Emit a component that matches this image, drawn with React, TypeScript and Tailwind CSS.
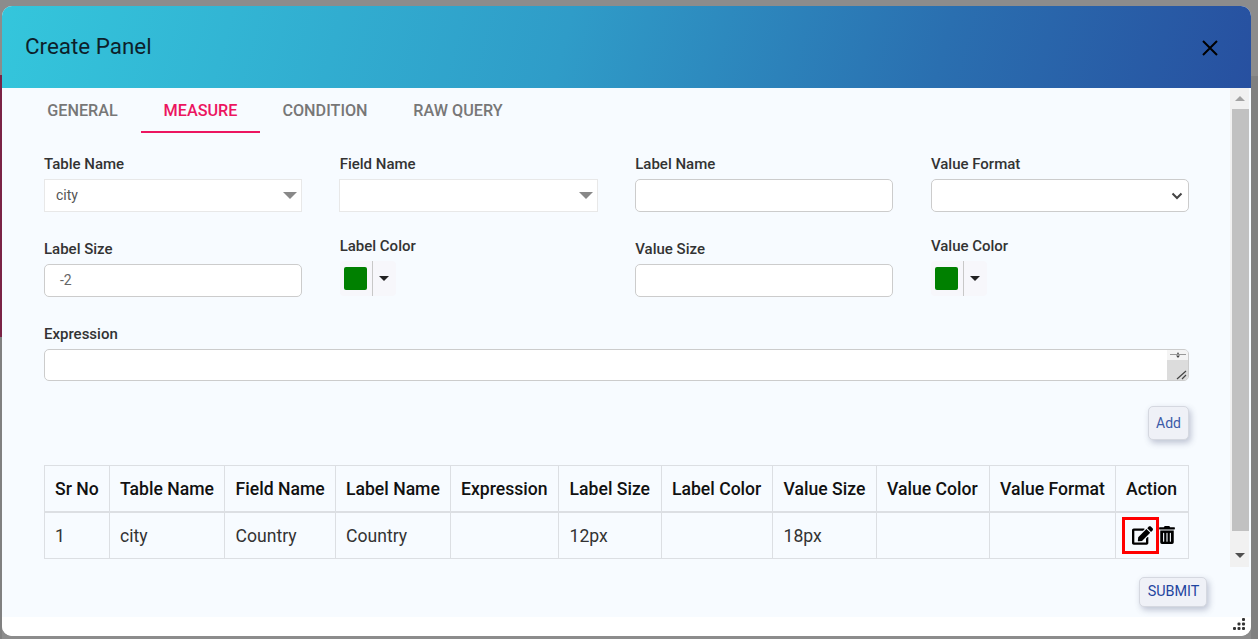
import React from "react";

const headers = ["Sr No","Table Name","Field Name","Label Name","Expression","Label Size","Label Color","Value Size","Value Color","Value Format","Action"];
const widths = [65,115,111,115,108,103,111,104,113,126,73];
const row = ["1","city","Country","Country","","12px","","18px","",""];

function pad(i: number) {
  return i === 2 || i === 5 || i === 7 ? "pl-[10.6px]" : "pl-[10px]";
}

function Label({ children, cls = "" }: { children: React.ReactNode; cls?: string }) {
  return <div className={"text-[15px] leading-[16px] font-medium text-[#333333] " + cls}>{children}</div>;
}

function Select2({ value, cls = "" }: { value?: string; cls?: string }) {
  return (
    <div className={"flex h-[33px] items-center justify-between border border-[#e8e8e8] bg-white pl-[11px] pr-[4px] text-[14px] text-[#555555] " + cls}>
      <span>{value}</span>
      <span className="h-0 w-0 border-x-[7px] border-t-[7px] border-x-transparent border-t-[#888888]" />
    </div>
  );
}

function Input({ value }: { value?: string }) {
  return (
    <div className="flex h-[33px] items-center rounded-[5px] border border-[#cccccc] bg-white px-[15px] text-[14px] text-[#666666]">
      {value}
    </div>
  );
}

function ColorPick() {
  return (
    <div className="flex h-[35px] w-[56px] rounded-[4px] bg-[#f7f7fb]">
      <div className="flex w-[33px] items-center justify-center border-r border-[#c8c8c8]">
        <div className="h-[23px] w-[23px] rounded-[2px] bg-[#008000]" />
      </div>
      <div className="flex flex-1 items-center justify-center">
        <span className="h-0 w-0 border-x-[5px] border-t-[5px] border-x-transparent border-t-[#222222]" />
      </div>
    </div>
  );
}

export default function App() {
  return (
    <div className="relative h-[639px] w-[1258px] overflow-hidden bg-[#8c8c8c] font-['Roboto',sans-serif]">
      <div className="absolute left-0 top-[75px] h-[262px] w-[2px] bg-[#7a2346]" />
      <div className="absolute left-0 top-[337px] h-[302px] w-[2px] bg-[#808080]" />
      <div className="absolute left-[1251px] top-[76px] h-[563px] w-[7px] bg-[#808080]" />

      <div className="absolute left-[2px] top-[6px] flex h-[630px] w-[1249px] flex-col overflow-hidden rounded-[10px] bg-white">
        <div className="flex h-[82px] shrink-0 items-center justify-between bg-[linear-gradient(105deg,#34c6dc_0%,#2f9cc8_45%,#2a6fb0_75%,#2750a0_100%)] pl-[23px] pr-[33px]">
          <div className="text-[22.4px] leading-[26px] text-[#0d1f2b] mt-[-2px]">Create Panel</div>
          <svg width="16" height="16" viewBox="0 0 16 16" className="mt-[2px]">
            <path d="M1 1L15 15M15 1L1 15" stroke="#000" strokeWidth="2" fill="none" />
          </svg>
        </div>

        <div className="flex h-[529px] shrink-0 bg-[#f7fbff]">
          <div className="w-[1228px] shrink-0 pl-[42px] pr-[41px]">
            <div className="flex h-[45px] text-[16.2px] font-medium text-[#777777]">
              <div className="flex w-[77px] items-start justify-center pt-[11px]">GENERAL</div>
              <div className="ml-[20px] flex w-[119px] items-start justify-center border-b-2 border-[#ec1560] pt-[11px] text-[#ec1560]">MEASURE</div>
              <div className="ml-[22px] flex w-[86px] items-start justify-center pt-[11px]">CONDITION</div>
              <div className="ml-[45px] flex w-[90px] items-start justify-center pt-[11px]">RAW QUERY</div>
            </div>

            <div className="grid grid-cols-4 gap-x-[37.5px] pt-[23px]">
              <div><Label cls="mb-[7px]">Table Name</Label><Select2 value="city" /></div>
              <div><Label cls="mb-[7px]">Field Name</Label><Select2 cls="ml-[-0.5px]" /></div>
              <div><Label cls="mb-[7px]">Label Name</Label><Input /></div>
              <div>
                <Label cls="mb-[7px]">Value Format</Label>
                <div className="flex h-[33px] items-center justify-end rounded-[5px] border border-[#cccccc] bg-white pr-[5px]">
                  <svg width="12" height="8" viewBox="0 0 12 8"><path d="M1.5 1.5L6 6L10.5 1.5" stroke="#444" strokeWidth="2" fill="none" /></svg>
                </div>
              </div>
            </div>

            <div className="grid grid-cols-4 gap-x-[37.5px] pt-[20px]">
              <div className="pt-[9px]"><Label cls="mb-[7px]">Label Size</Label><Input value="-2" /></div>
              <div className="pt-[6px]"><Label cls="mb-[7px]">Label Color</Label><ColorPick /></div>
              <div className="pt-[9px]"><Label cls="mb-[7px]">Value Size</Label><Input /></div>
              <div className="pt-[6px]"><Label cls="mb-[7px]">Value Color</Label><ColorPick /></div>
            </div>

            <Label cls="mt-[29px] mb-[7px]">Expression</Label>
            <div className="flex h-[32px] justify-end overflow-hidden rounded-[5px] border border-[#cccccc] bg-white">
              <div className="relative w-[21px] bg-[#dcdcdc]">
                <div className="flex h-[10px] items-center justify-center bg-[#f4f4f4]">
                  <svg width="16" height="8" viewBox="0 0 16 8"><path d="M0 3.5H16" stroke="#999" /><path d="M6 4.5H10L8 7Z M7 3L8 1L9 3Z" fill="#444" /></svg>
                </div>
                <svg width="12" height="10" viewBox="0 0 12 10" className="absolute bottom-0 right-0"><path d="M1 9L10 1M6 9L10 5" stroke="#444" strokeWidth="1.2" fill="none" /></svg>
              </div>
            </div>

            <div className="mt-[25px] flex justify-end">
              <div className="flex h-[34px] w-[41px] items-center justify-center rounded-[5px] border border-[#d5d8e0] bg-[#eff1f7] text-[14px] text-[#3c5aa8] shadow-[2px_3px_6px_rgba(60,70,110,0.3)]">Add</div>
            </div>

            <table className="mt-[25px] table-fixed border-collapse text-[#111111]" style={{ width: 1144 }}>
              <colgroup>{widths.map((w, i) => <col key={i} style={{ width: w }} />)}</colgroup>
              <thead>
                <tr className="h-[46px]">
                  {headers.map((h, i) => (
                    <th key={h} className={"whitespace-nowrap border border-b-2 border-[#dcdfe3] pr-[8px] pt-[2px] text-left text-[17.6px] font-medium leading-[20px] text-[#111111] " + pad(i)}>{h}</th>
                  ))}
                </tr>
              </thead>
              <tbody>
                <tr className="h-[47px]">
                  {row.map((c, i) => (
                    <td key={i} className={"border border-[#dcdfe3] pr-[8px] pt-[2px] text-[17.6px] text-[#333333] " + pad(i)}>{c}</td>
                  ))}
                  <td className="border border-[#dcdfe3] p-0">
                    <div className="flex items-center pl-[6px]">
                      <div className="flex h-[37px] w-[37px] items-center justify-center border-[3px] border-[#ff0000] pl-[3px]">
                        <svg width="21" height="19" viewBox="0 0 576 512"><path fill="#000" d="M402.6 83.2l90.2 90.2c3.8 3.8 3.8 10 0 13.8L274.4 405.6l-92.8 10.3c-12.4 1.4-22.9-9.1-21.5-21.5l10.3-92.8L388.8 83.2c3.8-3.8 10-3.8 13.8 0zm162-22.9l-48.8-48.8c-15.2-15.2-39.9-15.2-55.2 0l-35.4 35.4c-3.8 3.8-3.8 10 0 13.8l90.2 90.2c3.8 3.8 10 3.8 13.8 0l35.4-35.4c15.2-15.3 15.2-40 0-55.2zM384 346.2V448H64V128h229.8c3.2 0 6.2-1.3 8.5-3.5l40-40c7.6-7.6 2.2-20.5-8.5-20.5H48C21.5 64 0 85.5 0 112v352c0 26.5 21.5 48 48 48h352c26.5 0 48-21.5 48-48V306.2c0-10.7-12.9-16-20.5-8.5l-40 40c-2.2 2.3-3.5 5.3-3.5 8.5z" /></svg>
                      </div>
                      <svg width="16" height="18" viewBox="0 0 448 512"><path fill="#000" d="M32 464a48 48 0 0 0 48 48h288a48 48 0 0 0 48-48V128H32zm272-256a16 16 0 0 1 32 0v224a16 16 0 0 1-32 0zm-96 0a16 16 0 0 1 32 0v224a16 16 0 0 1-32 0zm-96 0a16 16 0 0 1 32 0v224a16 16 0 0 1-32 0zM432 32H312l-9.4-18.7A24 24 0 0 0 281.1 0H166.8a23.72 23.72 0 0 0-21.4 13.3L136 32H16A16 16 0 0 0 0 48v32a16 16 0 0 0 16 16h416a16 16 0 0 0 16-16V48a16 16 0 0 0-16-16z" /></svg>
                    </div>
                  </td>
                </tr>
              </tbody>
            </table>

            <div className="mt-[18px] flex justify-end">
              <div className="mr-[-18px] flex h-[30px] w-[68px] items-center justify-center rounded-[5px] border border-[#d5d8e0] bg-[#eff1f7] pb-[1px] pl-[1px] text-[14.4px] font-normal text-[#1f45a0] shadow-[2px_3px_6px_rgba(60,70,110,0.3)]">SUBMIT</div>
            </div>
          </div>

          <div className="flex h-[479px] w-[19px] shrink-0 flex-col bg-[#f1f1f1]">
            <div className="flex h-[21px] items-center justify-center">
              <span className="h-0 w-0 border-x-[5px] border-b-[5px] border-x-transparent border-b-[#a3a3a3]" />
            </div>
            <div className="ml-[2px] h-[422px] bg-[#c1c1c1]" />
            <div className="flex flex-1 items-end justify-center pb-[9px]">
              <span className="h-0 w-0 border-x-[5px] border-t-[5px] border-x-transparent border-t-[#505050]" />
            </div>
          </div>
        </div>

        <div className="relative flex-1 bg-white">
          <svg width="14" height="14" viewBox="0 0 14 14" className="absolute bottom-[4px] right-[4px]">
            <g fill="#333"><rect x="9" y="0" width="3" height="3" rx="1" /><rect x="4.5" y="4.5" width="3" height="3" rx="1" /><rect x="9" y="4.5" width="3" height="3" rx="1" /><rect x="0" y="9" width="3" height="3" rx="1" /><rect x="4.5" y="9" width="3" height="3" rx="1" /><rect x="9" y="9" width="3" height="3" rx="1" /></g>
          </svg>
        </div>
      </div>
    </div>
  );
}
